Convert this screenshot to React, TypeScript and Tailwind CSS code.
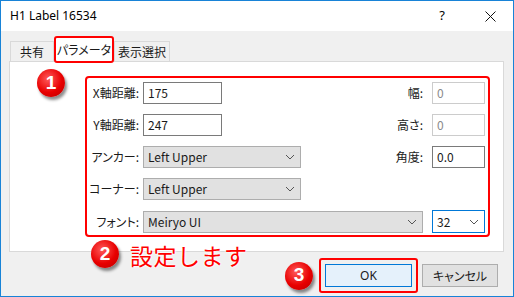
import React from 'react';

const font = "font-['Noto_Sans_CJK_JP','Noto_Sans',sans-serif] [font-feature-settings:'palt']";

const Badge = ({ n, className }: { n: string; className?: string }) => (
  <div
    className={`w-[28px] h-[28px] rounded-full flex items-center justify-center text-white text-[19px] font-bold font-['Liberation_Sans',sans-serif] bg-[radial-gradient(circle_at_40%_35%,#ff5a5a,#e80000_55%,#b80000)] shadow-[2px_3px_3px_rgba(0,0,0,0.45)] ${className ?? ''}`}
  >
    {n}
  </div>
);

const Chevron = () => (
  <svg width="10" height="6" viewBox="0 0 10 6" className="shrink-0">
    <polyline points="1,1 5,5 9,1" fill="none" stroke="#555" strokeWidth="1" />
  </svg>
);

const Input = ({ value, disabled, w = 'w-[79px]' }: { value: string; disabled?: boolean; w?: string }) => (
  <div
    className={`${w} h-[22px] border bg-white flex items-center pl-[4px] text-[12px] ${
      disabled ? 'border-[#cccccc] text-[#8a8a8a]' : 'border-[#7a7a7a] text-[#1a1a1a]'
    }`}
  >
    {value}
  </div>
);

const Select = ({ value, w }: { value: string; w: string }) => (
  <div className={`${w} h-[22px] border border-[#adadad] bg-[#e1e1e1] flex items-center justify-between pl-[4px] pr-[5px] text-[12px] text-[#1a1a1a]`}>
    <span>{value}</span>
    <Chevron />
  </div>
);

const Label = ({ text }: { text: string }) => (
  <div className="w-[52px] text-right text-[12px] text-[#1a1a1a] mr-[4px] whitespace-nowrap">{text}</div>
);

const RightLabel = ({ text }: { text: string }) => (
  <div className="text-right text-[12px] text-[#1a1a1a] mr-[9px] whitespace-nowrap">{text}</div>
);

export default function App() {
  return (
    <div className={`w-[514px] h-[297px] border border-[#1883d7] flex flex-col bg-[#f0f0f0] ${font}`}>
      {/* Title bar */}
      <div className="h-[30px] bg-white flex items-center pl-[9px] text-[12px] text-black shrink-0">
        <span className="font-['Noto_Sans',sans-serif]">H1 Label 16534</span>
        <span className="ml-auto mr-[40px] text-[13px] font-['Noto_Sans',sans-serif]">?</span>
        <svg width="11" height="11" viewBox="0 0 11 11" className="mr-[17px]">
          <path d="M0.5 0.5 L10.5 10.5 M10.5 0.5 L0.5 10.5" stroke="#111" strokeWidth="1" />
        </svg>
      </div>

      {/* Body */}
      <div className="flex-1 relative px-[8px] pt-[5px]">
        {/* Tabs */}
        <div className="flex items-end h-[25px] pl-[1px]">
          <div className="w-[44px] h-[20px] border border-b-0 border-[#d9d9d9] bg-[#f0f0f0] flex items-center justify-center text-[12px] text-[#1a1a1a] whitespace-nowrap">
            共有
          </div>
          <div className="relative z-10 w-[60px] h-[27px] mb-[-2px] border-2 border-[#ff0000] rounded-[3px] bg-white flex items-center justify-center text-[12px] text-[#1a1a1a] whitespace-nowrap">
            パラメータ
          </div>
          <div className="w-[56px] h-[20px] border border-b-0 border-[#d9d9d9] bg-[#f0f0f0] flex items-center justify-center text-[12px] text-[#1a1a1a] whitespace-nowrap">
            表示選択
          </div>
        </div>

        {/* Tab panel */}
        <div className="w-[495px] h-[191px] border border-[#d9d9d9] bg-white pl-[75px] pt-[14px]">
          <div className="w-[405px] h-[161px] border-2 border-[#ff0000] rounded-[4px] pt-[4px] pr-[3px] flex flex-col gap-[10px]">
            <div className="flex items-center">
              <Label text="X軸距離:" />
              <Input value="175" />
              <div className="ml-auto flex items-center">
                <RightLabel text="幅:" />
                <Input value="0" disabled w="w-[53px]" />
              </div>
            </div>
            <div className="flex items-center">
              <Label text="Y軸距離:" />
              <Input value="247" />
              <div className="ml-auto flex items-center">
                <RightLabel text="高さ:" />
                <Input value="0" disabled w="w-[53px]" />
              </div>
            </div>
            <div className="flex items-center">
              <Label text="アンカー:" />
              <Select value="Left Upper" w="w-[158px]" />
              <div className="ml-auto flex items-center">
                <RightLabel text="角度:" />
                <Input value="0.0" w="w-[53px]" />
              </div>
            </div>
            <div className="flex items-center">
              <Label text="コーナー:" />
              <Select value="Left Upper" w="w-[158px]" />
            </div>
            <div className="flex items-center">
              <Label text="フォント:" />
              <Select value="Meiryo UI" w="w-[280px]" />
              <div className="ml-auto h-[23px] w-[53px] border border-[#0078d7] bg-white flex items-center justify-between pl-[4px] pr-[5px] text-[12px] text-[#1a1a1a]">
                <span>32</span>
                <Chevron />
              </div>
            </div>
          </div>
        </div>

        {/* Buttons */}
        <div className="flex items-center justify-end mt-[6px] pr-[7px]">
          <Badge n="3" className="mr-[6px]" />
          <div className="border-2 border-[#ff0000] rounded-[3px] p-[4px] mr-[4px]">
            <div className="w-[87px] h-[23px] border border-[#0078d7] bg-[#e5f1fb] flex items-center justify-center text-[12px] text-[#1a1a1a] font-['Noto_Sans',sans-serif]">
              OK
            </div>
          </div>
          <div className="w-[76px] h-[23px] border border-[#adadad] bg-[#e1e1e1] flex items-center justify-center text-[12px] text-[#1a1a1a] whitespace-nowrap">
            キャンセル
          </div>
        </div>

        {/* Annotations */}
        <Badge n="1" className="absolute left-[36px] top-[38px]" />
        <Badge n="2" className="absolute left-[90px] top-[209px]" />
        <div className="absolute left-[129px] top-[208px] text-[23px] leading-[32px] tracking-[0.5px] text-[#ff0000] whitespace-nowrap [font-feature-settings:normal] [text-shadow:0_0_2px_#fff,0_0_2px_#fff,0_0_3px_#fff]">
          設定します
        </div>
      </div>
    </div>
  );
}
